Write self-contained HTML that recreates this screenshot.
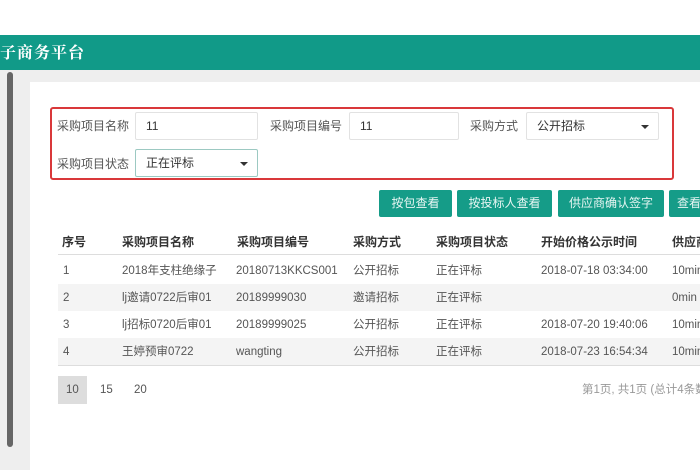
<!DOCTYPE html>
<html><head><meta charset="utf-8"><style>
*{margin:0;padding:0;box-sizing:border-box}
body{width:700px;height:470px;overflow:hidden;background:#fff;font-family:"Liberation Sans","Noto Sans CJK SC",sans-serif;font-size:12px;color:#444;position:relative}
.a{position:absolute;line-height:16px;white-space:nowrap}
.top{left:0;top:35px;width:700px;height:35px;background:#119a88;color:#fff;font-size:16px;font-weight:bold;line-height:33px;font-family:"Noto Serif CJK SC",serif;letter-spacing:1px}
.gray{left:0;top:70px;width:700px;height:400px;background:#eeeeee}
.lbar{left:7px;top:72px;width:6px;height:375px;background:#666;border-radius:3px}
.panel{left:30px;top:82px;width:670px;height:388px;background:#fff}
.red{left:50px;top:107px;width:624px;height:73px;border:2px solid #d9383a;border-radius:3px}
.lab{font-size:12px;color:#555}
.inp{border:1px solid #e2e2e2;background:#fff;height:28px;border-radius:2px;line-height:26px;padding-left:10px;font-size:12px;color:#333}
.btn{background:#159c88;color:#e8f6f3;height:27px;line-height:27px;text-align:center;border-radius:2px;font-size:12px}
.th{top:234px;font-weight:bold;color:#333;font-size:12px}
.row{left:58px;width:642px;height:27px}
.c{font-size:11.5px;color:#555}
.arr{width:0;height:0;border-left:4px solid transparent;border-right:4px solid transparent;border-top:4px solid #333}
</style></head><body>
<div class="a top">子商务平台</div>
<div class="a gray"></div>
<div class="a lbar"></div>
<div class="a panel"></div>
<div class="a red"></div>
<div class="a lab" style="left:57px;top:118px">采购项目名称</div>
<div class="a inp" style="left:135px;top:112px;width:123px">11</div>
<div class="a lab" style="left:270px;top:118px">采购项目编号</div>
<div class="a inp" style="left:349px;top:112px;width:110px">11</div>
<div class="a lab" style="left:470px;top:118px">采购方式</div>
<div class="a inp" style="left:526px;top:112px;width:133px">公开招标</div>
<div class="a arr" style="left:641px;top:125px"></div>
<div class="a lab" style="left:57px;top:156px">采购项目状态</div>
<div class="a inp" style="left:135px;top:149px;width:123px;border-color:#9cc9c2">正在评标</div>
<div class="a arr" style="left:240px;top:162px"></div>
<div class="a btn" style="left:379px;top:190px;width:73px;line-height:27px">按包查看</div>
<div class="a btn" style="left:457px;top:190px;width:95px;line-height:27px">按投标人查看</div>
<div class="a btn" style="left:558px;top:190px;width:106px;line-height:27px">供应商确认签字</div>
<div class="a btn" style="left:669px;top:190px;width:40px;line-height:27px">查看</div>
<div class="a" style="left:58px;top:254px;width:642px;height:1px;background:#ddd"></div>
<div class="a th" style="left:62px">序号</div>
<div class="a th" style="left:122px">采购项目名称</div>
<div class="a th" style="left:237px">采购项目编号</div>
<div class="a th" style="left:353px">采购方式</div>
<div class="a th" style="left:436px">采购项目状态</div>
<div class="a th" style="left:541px">开始价格公示时间</div>
<div class="a th" style="left:672px">供应商</div>
<div class="a row" style="top:284px;background:#f4f4f4"></div>
<div class="a row" style="top:338px;background:#f4f4f4"></div>
<div class="a" style="left:58px;top:365px;width:642px;height:1px;background:#ddd"></div>
<div class="a c" style="left:63px;top:263px">1</div><div class="a c" style="left:122px;top:263px">2018年支柱绝缘子</div><div class="a c" style="left:236px;top:263px">20180713KKCS001</div><div class="a c" style="left:353px;top:263px">公开招标</div><div class="a c" style="left:436px;top:263px">正在评标</div><div class="a c" style="left:541px;top:263px">2018-07-18 03:34:00</div><div class="a c" style="left:672px;top:263px">10min</div>
<div class="a c" style="left:63px;top:290px">2</div><div class="a c" style="left:122px;top:290px">lj邀请0722后审01</div><div class="a c" style="left:236px;top:290px">20189999030</div><div class="a c" style="left:353px;top:290px">邀请招标</div><div class="a c" style="left:436px;top:290px">正在评标</div><div class="a c" style="left:672px;top:290px">0min</div>
<div class="a c" style="left:63px;top:317px">3</div><div class="a c" style="left:122px;top:317px">lj招标0720后审01</div><div class="a c" style="left:236px;top:317px">20189999025</div><div class="a c" style="left:353px;top:317px">公开招标</div><div class="a c" style="left:436px;top:317px">正在评标</div><div class="a c" style="left:541px;top:317px">2018-07-20 19:40:06</div><div class="a c" style="left:672px;top:317px">10min</div>
<div class="a c" style="left:63px;top:344px">4</div><div class="a c" style="left:122px;top:344px">王婷预审0722</div><div class="a c" style="left:236px;top:344px">wangting</div><div class="a c" style="left:353px;top:344px">公开招标</div><div class="a c" style="left:436px;top:344px">正在评标</div><div class="a c" style="left:541px;top:344px">2018-07-23 16:54:34</div><div class="a c" style="left:672px;top:344px">10min</div>
<div class="a" style="left:58px;top:376px;width:29px;height:28px;background:#ddd"></div>
<div class="a c" style="left:66px;top:382px">10</div>
<div class="a c" style="left:100px;top:382px">15</div>
<div class="a c" style="left:134px;top:382px">20</div>
<div class="a c" style="left:582px;top:382px;color:#999">第1页, 共1页 (总计4条数据)</div>
</body></html>
